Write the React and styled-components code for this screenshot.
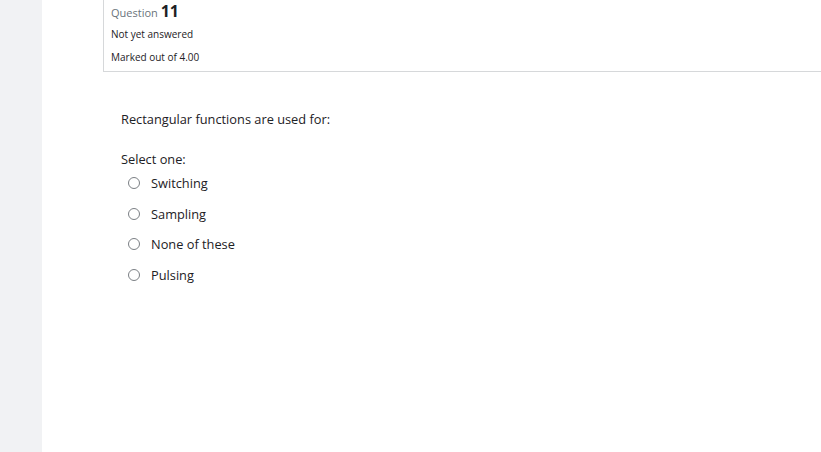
import React from 'react'
import styled, { createGlobalStyle } from 'styled-components'

const Global = createGlobalStyle`
  html, body {
    margin: 0;
    padding: 0;
    background: #fff;
    overflow: hidden;
  }
  body {
    font-family: "Open Sans", "Noto Sans", sans-serif;
    color: #1d2125;
  }
`

const options = ['Switching', 'Sampling', 'None of these', 'Pulsing']

export default function App() {
  return (
    <Page>
      <Global />
      <SideStrip />
      <Main>
        <InfoBox>
          <QuestionNo>
            Question <Num>11</Num>
          </QuestionNo>
          <State>Not yet answered</State>
          <Grade>Marked out of 4.00</Grade>
        </InfoBox>
        <Content>
          <QText>Rectangular functions are used for:</QText>
          <Prompt>Select one:</Prompt>
          <Answers>
            {options.map((o) => (
              <Option key={o}>
                <Radio />
                <Label>{o}</Label>
              </Option>
            ))}
          </Answers>
        </Content>
      </Main>
    </Page>
  )
}

const Page = styled.div`
  display: flex;
  height: 452px;
  width: 821px;
`

const SideStrip = styled.div`
  width: 42px;
  flex-shrink: 0;
  background: #f1f2f4;
`

const Main = styled.div`
  flex: 1;
  padding-left: 61px;
  overflow: hidden;
`

const InfoBox = styled.div`
  width: 760px;
  height: 72px;
  box-sizing: border-box;
  border-left: 1px solid #d6d8da;
  border-bottom: 1px solid #d6d8da;
  padding: 0 0 0 7px;
`

const QuestionNo = styled.div`
  font-size: 11px;
  color: #6a737b;
  height: 22px;
  line-height: 22px;
`

const Num = styled.span`
  font-size: 16px;
  font-weight: 700;
  color: #1d2125;
`

const State = styled.div`
  font-size: 10px;
  margin-top: 4px;
  line-height: 16px;
`

const Grade = styled.div`
  font-size: 10px;
  margin-top: 7px;
  line-height: 16px;
`

const Content = styled.div`
  padding: 37px 0 0 18px;
`

const QText = styled.div`
  font-size: 12.8px;
  line-height: 20px;
`

const Prompt = styled.div`
  font-size: 12.8px;
  line-height: 20px;
  margin-top: 20px;
`

const Answers = styled.div`
  display: flex;
  flex-direction: column;
  gap: 10.5px;
  margin-top: 4px;
  padding-left: 7px;
`

const Option = styled.div`
  display: flex;
  align-items: center;
  height: 20px;
`

const Radio = styled.span`
  width: 10px;
  height: 10px;
  border: 1.5px solid #7b7f84;
  border-radius: 50%;
  margin-right: 11px;
`

const Label = styled.span`
  font-size: 12.8px;
  line-height: 20px;
`
